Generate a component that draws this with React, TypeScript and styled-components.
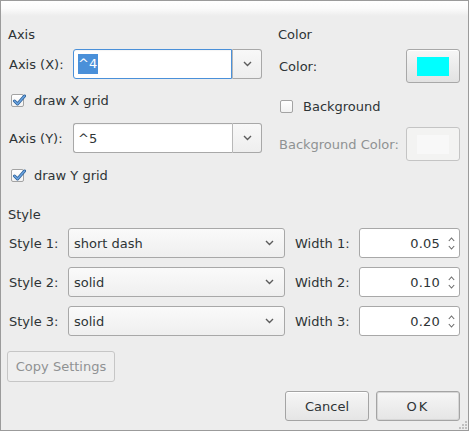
import React from "react";
import styled, { createGlobalStyle } from "styled-components";

const Global = createGlobalStyle`
  html, body { margin: 0; padding: 0; background: #ededed; }
  * { box-sizing: border-box; }
`;

const Window = styled.div`
  position: relative;
  width: 469px;
  height: 431px;
  border: 1px solid #9b9b9b;
  background: #ededed;
  display: flex;
  flex-direction: column;
  font-family: "DejaVu Sans", "Liberation Sans", sans-serif;
  font-size: 13px;
  color: #2e3436;
  overflow: hidden;
`;

const TitleBar = styled.div`
  height: 15px;
  flex: none;
  background: linear-gradient(#ffffff 0%, #fbfbfb 50%, #ededed 100%);
`;

const Body = styled.div`
  padding: 11px 8px 0 7px;
  display: flex;
  flex-direction: column;
`;

const TopGrid = styled.div`
  display: grid;
  grid-template-columns: 254px 182px;
  column-gap: 16px;
`;

const Column = styled.div`
  display: flex;
  flex-direction: column;
`;

const SectionTitle = styled.div<{ $mt?: number; $mb?: number }>`
  height: 15px;
  line-height: 15px;
  margin-top: ${(p) => p.$mt ?? 0}px;
  margin-bottom: ${(p) => p.$mb ?? 0}px;
`;

const FormRow = styled.div<{ $mt?: number; $label: number }>`
  display: grid;
  grid-template-columns: ${(p) => p.$label}px 1fr;
  align-items: center;
  height: 30px;
  margin-top: ${(p) => p.$mt ?? 0}px;
`;

const Label = styled.span<{ $disabled?: boolean }>`
  padding-left: 1px;
  white-space: nowrap;
  color: ${(p) => (p.$disabled ? "#8f9293" : "#2e3436")};
`;

const ComboEntry = styled.div`
  display: flex;
  height: 30px;
`;

const Entry = styled.div<{ $focused?: boolean }>`
  flex: 1;
  display: flex;
  align-items: center;
  padding-left: 4px;
  background: #ffffff;
  border: 1px solid ${(p) => (p.$focused ? "#4a90d9" : "#a8a8a8")};
  border-radius: 3px 0 0 3px;
  ${(p) => (p.$focused ? "" : "border-right: none;")}
  box-shadow: inset 0 1px 1px rgba(0,0,0,0.04);
`;

const Selected = styled.span`
  background: #4a90d9;
  color: #ffffff;
  line-height: 20px;
  padding-right: 1px;
`;

const DropButton = styled.div`
  width: 30px;
  display: flex;
  align-items: center;
  justify-content: center;
  border: 1px solid #a8a8a8;
  border-left-color: #b8b8b8;
  border-radius: 0 3px 3px 0;
  background: linear-gradient(#f8f8f8, #eeeeee);
`;

const ComboButton = styled.div`
  height: 30px;
  display: flex;
  align-items: center;
  justify-content: space-between;
  padding: 0 10px 0 5px;
  border: 1px solid #a8a8a8;
  border-radius: 3px;
  background: linear-gradient(#fafafa, #efefef);
`;

const Spin = styled.div`
  height: 30px;
  display: flex;
  align-items: center;
  justify-content: flex-end;
  padding-right: 4px;
  border: 1px solid #a8a8a8;
  border-radius: 3px;
  background: #ffffff;
`;

const SpinValue = styled.span`
  margin-right: 8px;
  letter-spacing: 0.2px;
`;

const SpinArrows = styled.div`
  display: flex;
  flex-direction: column;
  gap: 3px;
`;

const CheckRow = styled.label<{ $mt: number; $indent: number }>`
  display: flex;
  align-items: center;
  height: 16px;
  margin-top: ${(p) => p.$mt}px;
  padding-left: ${(p) => p.$indent}px;
  gap: 10px;
`;

const Box = styled.span`
  width: 13px;
  height: 13px;
  border: 1px solid #a3a3a3;
  border-radius: 2px;
  background: linear-gradient(#ffffff, #f2f2f2);
  position: relative;
  display: inline-block;
  flex: none;
`;

const CheckMark = styled.svg`
  position: absolute;
  left: 0px;
  top: -2px;
`;

const ColorRow = styled.div<{ $mt?: number }>`
  display: flex;
  align-items: center;
  justify-content: space-between;
  height: 34px;
  margin-top: ${(p) => p.$mt ?? 0}px;
`;

const Swatch = styled.div<{ $disabled?: boolean }>`
  width: 54px;
  height: 34px;
  border: 1px solid ${(p) => (p.$disabled ? "#c4c4c4" : "#a8a8a8")};
  border-radius: 3px;
  background: ${(p) =>
    p.$disabled ? "#f3f3f2" : "linear-gradient(#f6f6f6, #e2e2e2)"};
  padding: 7px 0 0 10px;
  box-shadow: ${(p) => (p.$disabled ? "none" : "inset 0 1px 0 #ffffff")};
`;

const SwatchFill = styled.div<{ $color: string }>`
  width: 32px;
  height: 19px;
  background: ${(p) => p.$color};
`;

const StyleRows = styled.div`
  display: flex;
  flex-direction: column;
  gap: 9px;
`;

const StyleRow = styled.div`
  display: grid;
  grid-template-columns: 60px 217px 65px 101px;
  column-gap: 0;
  align-items: center;
  height: 30px;
  & > :nth-child(3) {
    margin-left: 9px;
  }
  grid-template-columns: 60px 217px 74px 101px;
`;

const Button = styled.div<{ $w: number; $default?: boolean; $disabled?: boolean }>`
  width: ${(p) => p.$w}px;
  height: ${(p) => (p.$disabled ? 31 : 30)}px;
  display: flex;
  align-items: center;
  justify-content: center;
  border: 1px solid ${(p) => (p.$disabled ? "#c6c6c6" : "#a4a4a4")};
  border-radius: 3px;
  color: ${(p) => (p.$disabled ? "#8f9293" : "#2e3436")};
  background: ${(p) =>
    p.$disabled ? "#efefef" : "linear-gradient(#f6f6f6, #e5e5e5)"};
  box-shadow: ${(p) =>
    p.$default ? "inset 0 0 0 1px #d6d6d6" : p.$disabled ? "none" : "inset 0 1px 0 #ffffff"};
  letter-spacing: ${(p) => (p.$default ? "2px" : "0")};
`;

const CopyRow = styled.div`
  margin-top: 15px;
  margin-left: -1px;
`;

const ActionRow = styled.div`
  display: flex;
  justify-content: flex-end;
  gap: 7px;
  margin-top: 9px;
`;

const Grip = styled.svg`
  position: absolute;
  right: 0;
  bottom: 0;
`;

const Chevron = ({ color = "#5c5c5c" }: { color?: string }) => (
  <svg width="9" height="6" viewBox="0 0 9 6">
    <path d="M1 1 L4.5 4.5 L8 1" fill="none" stroke={color} strokeWidth="1.4" />
  </svg>
);

const SmallChevron = ({ up }: { up?: boolean }) => (
  <svg width="7" height="5" viewBox="0 0 7 5">
    <path
      d={up ? "M0.8 4 L3.5 1 L6.2 4" : "M0.8 1 L3.5 4 L6.2 1"}
      fill="none"
      stroke="#6a6a6a"
      strokeWidth="1.1"
    />
  </svg>
);

const Check = ({ checked }: { checked?: boolean }) => (
  <Box>
    {checked && (
      <CheckMark width="14" height="14" viewBox="0 0 14 14">
        <path
          d="M2.5 8 L5.5 11 L12.5 3"
          fill="none"
          stroke="#2a5d94"
          strokeWidth="3"
          strokeLinecap="round"
          strokeLinejoin="round"
        />
        <path
          d="M2.5 8 L5.5 11 L12.5 3"
          fill="none"
          stroke="#6aa3e0"
          strokeWidth="1.6"
          strokeLinecap="round"
          strokeLinejoin="round"
        />
      </CheckMark>
    )}
  </Box>
);

const styles = [
  { label: "Style 1:", value: "short dash", wlabel: "Width 1:", w: "0.05" },
  { label: "Style 2:", value: "solid", wlabel: "Width 2:", w: "0.10" },
  { label: "Style 3:", value: "solid", wlabel: "Width 3:", w: "0.20" },
];

export default function App() {
  return (
    <>
      <Global />
      <Window>
        <TitleBar />
        <Body>
          <TopGrid>
            <Column>
              <SectionTitle $mb={7}>Axis</SectionTitle>
              <FormRow $label={65}>
                <Label>Axis (X):</Label>
                <ComboEntry>
                  <Entry $focused>
                    <Selected>^4</Selected>
                  </Entry>
                  <DropButton>
                    <Chevron />
                  </DropButton>
                </ComboEntry>
              </FormRow>
              <CheckRow $mt={13} $indent={3}>
                <Check checked />
                <span>draw X grid</span>
              </CheckRow>
              <FormRow $label={65} $mt={15}>
                <Label>Axis (Y):</Label>
                <ComboEntry>
                  <Entry>^5</Entry>
                  <DropButton>
                    <Chevron />
                  </DropButton>
                </ComboEntry>
              </FormRow>
              <CheckRow $mt={14} $indent={3}>
                <Check checked />
                <span>draw Y grid</span>
              </CheckRow>
            </Column>
            <Column>
              <SectionTitle $mb={7}>Color</SectionTitle>
              <ColorRow>
                <Label>Color:</Label>
                <Swatch>
                  <SwatchFill $color="#00ffff" />
                </Swatch>
              </ColorRow>
              <CheckRow $mt={15} $indent={2}>
                <Check />
                <span>Background</span>
              </CheckRow>
              <ColorRow $mt={13}>
                <Label $disabled>Background Color:</Label>
                <Swatch $disabled>
                  <SwatchFill $color="#f8f8f8" />
                </Swatch>
              </ColorRow>
            </Column>
          </TopGrid>
          <SectionTitle $mt={24} $mb={6}>
            Style
          </SectionTitle>
          <StyleRows>
            {styles.map((s) => (
              <StyleRow key={s.label}>
                <Label>{s.label}</Label>
                <ComboButton>
                  <span>{s.value}</span>
                  <Chevron />
                </ComboButton>
                <Label>{s.wlabel}</Label>
                <Spin>
                  <SpinValue>{s.w}</SpinValue>
                  <SpinArrows>
                    <SmallChevron up />
                    <SmallChevron />
                  </SpinArrows>
                </Spin>
              </StyleRow>
            ))}
          </StyleRows>
          <CopyRow>
            <Button $w={108} $disabled>
              Copy Settings
            </Button>
          </CopyRow>
          <ActionRow>
            <Button $w={84}>Cancel</Button>
            <Button $w={84} $default>
              OK
            </Button>
          </ActionRow>
        </Body>
        <Grip width="10" height="10" viewBox="0 0 10 10">
          {[
            [7, 1],
            [4, 4],
            [7, 4],
            [1, 7],
            [4, 7],
            [7, 7],
          ].map(([x, y], i) => (
            <rect key={i} x={x} y={y} width="2" height="2" fill="#c0c0c0" />
          ))}
        </Grip>
      </Window>
    </>
  );
}
